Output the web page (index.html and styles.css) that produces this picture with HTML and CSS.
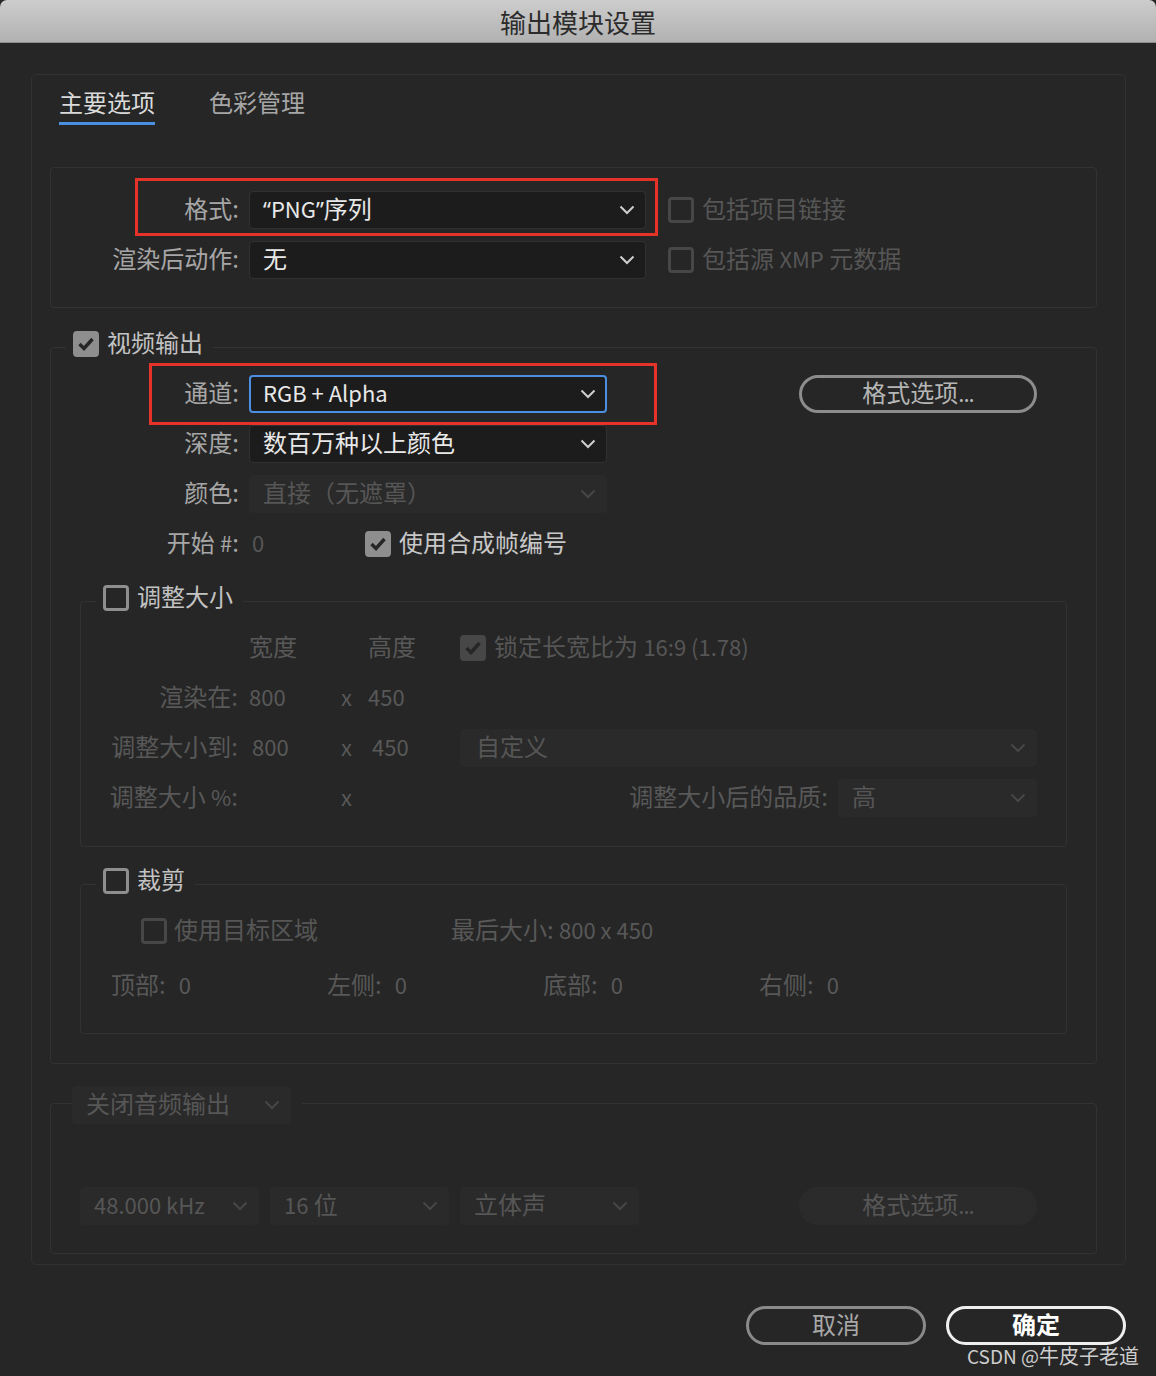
FILE: index.html
```html
<!DOCTYPE html>
<html lang="zh-CN">
<head>
<meta charset="utf-8">
<title>输出模块设置</title>
<link rel="stylesheet" href="styles.css">
</head>
<body>
<div class="window">
  <header class="titlebar">输出模块设置</header>
  <main class="content">
    <section class="panel">
      <nav class="tabs">
        <span class="tab active">主要选项</span>
        <span class="tab">色彩管理</span>
      </nav>

      <div class="box box-format">
        <div class="annot annot-format"></div>
        <div class="row">
          <span class="lbl">格式:</span>
          <div class="dd dd-wide"><span><span class="q">“</span><span class="lt">PNG</span><span class="q">”</span>序列</span><svg class="chev" width="16" height="10" viewBox="0 0 16 10"><path d="M1.5 1.5 L8 8 L14.5 1.5"/></svg></div>
          <span class="check disabled ml22"><span class="cb"></span><span class="ct">包括项目链接</span></span>
        </div>
        <div class="row">
          <span class="lbl">渲染后动作:</span>
          <div class="dd dd-wide"><span>无</span><svg class="chev" width="16" height="10" viewBox="0 0 16 10"><path d="M1.5 1.5 L8 8 L14.5 1.5"/></svg></div>
          <span class="check disabled ml22"><span class="cb"></span><span class="ct">包括源 <span class="lt">XMP</span> 元数据</span></span>
        </div>
      </div>

      <div class="box group video">
        <div class="legend"><span class="cb checked"><svg width="20" height="20" viewBox="0 0 20 20"><path d="M3.5 10 L8 14.5 L16.5 5"/></svg></span><span class="legend-text">视频输出</span></div>
        <div class="annot annot-channel"></div>
        <div class="vrows">
          <div class="row">
            <span class="lbl">通道:</span>
            <div class="dd dd-mid focus"><span class="lt">RGB + Alpha</span><svg class="chev" width="16" height="10" viewBox="0 0 16 10"><path d="M1.5 1.5 L8 8 L14.5 1.5"/></svg></div>
            <button class="pill pill-video" type="button">格式选项<span class="lt">...</span></button>
          </div>
          <div class="row">
            <span class="lbl">深度:</span>
            <div class="dd dd-mid"><span>数百万种以上颜色</span><svg class="chev" width="16" height="10" viewBox="0 0 16 10"><path d="M1.5 1.5 L8 8 L14.5 1.5"/></svg></div>
          </div>
          <div class="row">
            <span class="lbl">颜色:</span>
            <div class="dd dd-mid off"><span>直接（无遮罩）</span><svg class="chev" width="16" height="10" viewBox="0 0 16 10"><path d="M1.5 1.5 L8 8 L14.5 1.5"/></svg></div>
          </div>
          <div class="row">
            <span class="lbl">开始 <span class="lt">#</span>:</span>
            <span class="start-val lt">0</span>
            <span class="check"><span class="cb checked"><svg width="20" height="20" viewBox="0 0 20 20"><path d="M3.5 10 L8 14.5 L16.5 5"/></svg></span><span class="ct check-text">使用合成帧编号</span></span>
          </div>
        </div>

        <div class="box group sub resize">
          <div class="legend"><span class="cb"></span><span class="legend-text">调整大小</span></div>
          <div class="srows muted">
            <div class="row">
              <span class="c-lbl"></span><span class="c-w">宽度</span><span class="c-x"></span><span class="c-h">高度</span>
              <span class="c-rest"><span class="check disabled"><span class="cb checked"><svg width="20" height="20" viewBox="0 0 20 20"><path d="M3.5 10 L8 14.5 L16.5 5"/></svg></span><span class="ct">锁定长宽比为 <span class="lt">16:9 (1.78)</span></span></span></span>
            </div>
            <div class="row">
              <span class="c-lbl">渲染在:</span><span class="c-w lt">800</span><span class="c-x lt">x</span><span class="c-h lt">450</span>
            </div>
            <div class="row">
              <span class="c-lbl">调整大小到:</span><span class="c-w lt p3">800</span><span class="c-x lt">x</span><span class="c-h lt p4">450</span>
              <span class="c-rest"><span class="dd off dd-fill"><span class="p2">自定义</span><svg class="chev" width="16" height="10" viewBox="0 0 16 10"><path d="M1.5 1.5 L8 8 L14.5 1.5"/></svg></span></span>
            </div>
            <div class="row">
              <span class="c-lbl">调整大小 <span class="lt">%</span>:</span><span class="c-w"></span><span class="c-x lt">x</span><span class="c-h"></span>
              <span class="c-rest end"><span class="ql">调整大小后的品质:</span><span class="dd off dd-quality"><span>高</span><svg class="chev" width="16" height="10" viewBox="0 0 16 10"><path d="M1.5 1.5 L8 8 L14.5 1.5"/></svg></span></span>
            </div>
          </div>
        </div>

        <div class="box group sub crop">
          <div class="legend"><span class="cb"></span><span class="legend-text">裁剪</span></div>
          <div class="crop-r1 muted">
            <span class="check disabled target"><span class="cb"></span><span class="ct">使用目标区域</span></span>
            <span class="fs">最后大小: <span class="lt">800 x 450</span></span>
          </div>
          <div class="crop-r2 muted">
            <span class="cell">顶部:<span class="v lt">0</span></span>
            <span class="cell">左侧:<span class="v lt">0</span></span>
            <span class="cell">底部:<span class="v lt">0</span></span>
            <span class="cell">右侧:<span class="v lt">0</span></span>
          </div>
        </div>
      </div>

      <div class="box group audio">
        <div class="legend legend-audio"><span class="dd off dd-audio-mode"><span>关闭音频输出</span><svg class="chev" width="16" height="10" viewBox="0 0 16 10"><path d="M1.5 1.5 L8 8 L14.5 1.5"/></svg></span></div>
        <div class="audio-row">
          <span class="dd off dd-a"><span class="lt">48.000 kHz</span><svg class="chev" width="16" height="10" viewBox="0 0 16 10"><path d="M1.5 1.5 L8 8 L14.5 1.5"/></svg></span>
          <span class="dd off dd-a"><span><span class="lt">16</span> 位</span><svg class="chev" width="16" height="10" viewBox="0 0 16 10"><path d="M1.5 1.5 L8 8 L14.5 1.5"/></svg></span>
          <span class="dd off dd-a"><span>立体声</span><svg class="chev" width="16" height="10" viewBox="0 0 16 10"><path d="M1.5 1.5 L8 8 L14.5 1.5"/></svg></span>
          <button class="pill off pill-audio" type="button">格式选项<span class="lt">...</span></button>
        </div>
      </div>
    </section>

    <div class="actions">
      <button class="btn" type="button">取消</button>
      <button class="btn primary" type="button">确定</button>
    </div>
  </main>
  <div class="watermark"><span class="wl">CSDN @</span>牛皮子老道</div>
</div>
</body>
</html>
```

FILE: styles.css
```css
* { box-sizing: border-box; }
html, body { margin: 0; padding: 0; }
html { background: #262626; }
body {
  font-family: "Noto Sans CJK SC", "Noto Sans", sans-serif;
  font-size: 24px;
  line-height: 30px;
  color: #a6a6a6;
}
.lt { font-size: 22px; }
.window {
  width: 1156px;
  height: 1376px;
  background: #262626;
  position: relative;
  overflow: hidden;
}
.titlebar {
  height: 43px;
  background: linear-gradient(#cdcdcd, #b1b1b1);
  border-bottom: 1px solid #8c8c8c;
  border-radius: 7px 7px 0 0;
  text-align: center;
  font-size: 26px;
  line-height: 43px;
  color: #2c2c2c;
}
.content { padding: 31px 30px 0 31px; }
.panel {
  border: 1px solid #313131;
  border-radius: 5px;
  padding: 0 28px 10px 18px;
}
.tabs { display: flex; gap: 54px; margin-left: 9px; padding-top: 12px; }
.tab {
  line-height: 30px;
  padding-bottom: 5px;
  border-bottom: 3px solid transparent;
  color: #a6a6a6;
}
.tab.active { color: #dadada; border-bottom-color: #4a8fe2; }

/* lift CJK text ~2px so glyphs sit centred in 38px rows */
.lbl, .dd > span:first-child, .ct, .start-val, .c-lbl, .c-w, .c-x, .c-h,
.ql, .fs, .cell, .legend-text { padding-bottom: 4px; }

.box { border: 1px solid #323232; border-radius: 4px; position: relative; }
.box-format {
  margin-top: 42px;
  padding: 23px 0 28px;
  display: flex;
  flex-direction: column;
  gap: 12px;
}
.row { display: flex; align-items: center; height: 38px; }
.lbl { width: 188px; margin-right: 10px; text-align: right; flex: none; white-space: nowrap; }

.dd {
  display: flex;
  align-items: center;
  justify-content: space-between;
  height: 38px;
  padding: 0 10px 0 13px;
  background: #1c1c1c;
  border: 1px solid #313131;
  border-radius: 4px;
  color: #e8e8e8;
  flex: none;
  white-space: nowrap;
}
.chev { flex: none; color: #cfcfcf; }
.chev path { fill: none; stroke: currentColor; stroke-width: 2; }
.dd.focus { border: 2px solid #4a8fe2; padding-left: 12px; padding-right: 9px; }
.dd.off { background: #2a2a2a; border-color: #2a2a2a; color: #565656; }
.dd.off .chev { color: #474747; }
.q { font-family: "Noto Sans", sans-serif; font-size: 22px; }
.dd-wide { width: 397px; }
.dd-mid { width: 358px; }

.check { display: flex; align-items: center; gap: 8px; color: #c6c6c6; white-space: nowrap; }
.check.disabled { color: #565656; }
.ml22 { margin-left: 22px; }
.cb {
  width: 26px;
  height: 26px;
  border: 3px solid #8e8e8e;
  border-radius: 4px;
  flex: none;
  display: flex;
  align-items: center;
  justify-content: center;
}
.cb svg path { fill: none; stroke: #262626; stroke-width: 3.4; stroke-linejoin: miter; }
.cb.checked { background: #8e8e8e; }
.disabled .cb { border-color: #474747; }
.disabled .cb.checked { background: #474747; }

.annot { position: absolute; border: 3px solid #e5332a; pointer-events: none; }
.annot-format { left: 84px; top: 10px; width: 523px; height: 58px; }
.annot-channel { left: 98px; top: 15px; width: 508px; height: 62px; }

.group { margin-top: 39px; }
.video { padding-bottom: 29px; }
.legend {
  display: flex;
  align-items: center;
  gap: 8px;
  width: max-content;
  height: 26px;
  margin-top: -17px;
  margin-left: 15px;
  padding: 0 10px 0 7px;
  background: #262626;
}
.legend-text { color: #c2c2c2; line-height: 26px; }
.vrows { margin-top: 18px; display: flex; flex-direction: column; gap: 12px; }
.pill {
  appearance: none;
  font: inherit;
  height: 38px;
  padding: 0 0 4px;
  border: 3px solid #8c8c8c;
  border-radius: 19px;
  background: transparent;
  color: #b5b5b5;
  display: flex;
  align-items: center;
  justify-content: center;
  flex: none;
}
.pill .lt { letter-spacing: -1px; }
.pill-video { width: 238px; margin-left: 192px; }
.pill.off { border-color: #2b2b2b; background: #2b2b2b; color: #565656; }
.start-val { width: 116px; padding-left: 3px; color: #565656; flex: none; }
.check-text { color: #c8c8c8; }

.sub { margin: 0 29px; }
.resize { margin-top: 38px; padding-bottom: 29px; }
.srows { margin-top: 18px; display: flex; flex-direction: column; gap: 12px; }
.muted { color: #585858; }
.c-lbl { width: 157px; margin-right: 11px; text-align: right; flex: none; white-space: nowrap; }
.c-w { width: 92px; flex: none; }
.c-x { width: 27px; flex: none; }
.c-h { width: 92px; flex: none; }
.p3 { padding-left: 3px; }
.p4 { padding-left: 4px; }
.p2 { padding-left: 2px; }
.c-rest { flex: 1; display: flex; align-items: center; padding-right: 29px; }
.c-rest.end { justify-content: flex-end; }
.dd-fill { flex: 1; }
.dd-quality { width: 199px; margin-left: 10px; }

.crop { margin-top: 37px; padding-bottom: 28px; }
.crop-r1 { margin-top: 18px; height: 38px; display: flex; align-items: center; padding-left: 60px; }
.crop-r1 .target { width: 310px; gap: 7px; }
.crop-r2 { margin-top: 17px; height: 38px; display: flex; align-items: center; padding-left: 30px; }
.cell { width: 216px; flex: none; white-space: nowrap; }
.cell .v { margin-left: 13px; }

.audio { padding-bottom: 28px; }
.legend-audio { margin-top: -18px; margin-left: 21px; padding: 0 11px 0 0; height: 38px; }
.dd-audio-mode { width: 219px; }
.audio-row { margin-top: 63px; display: flex; align-items: center; gap: 11px; padding-left: 29px; }
.dd-a { width: 179px; }
.pill-audio { width: 238px; margin-left: 149px; }

.actions { display: flex; justify-content: flex-end; gap: 20px; margin-top: 41px; }
.btn {
  appearance: none;
  font: inherit;
  width: 180px;
  height: 39px;
  padding: 0 0 3px;
  border: 3px solid #8a8a8a;
  border-radius: 20px;
  background: transparent;
  color: #a8a8a8;
  line-height: 30px;
}
.btn.primary { border-color: #efefef; color: #ffffff; font-weight: bold; }

.watermark {
  position: absolute;
  right: 17px;
  bottom: 8px;
  font-size: 20px;
  line-height: 24px;
  color: #cdcdcd;
}
.wl { font-size: 19px; }
```
